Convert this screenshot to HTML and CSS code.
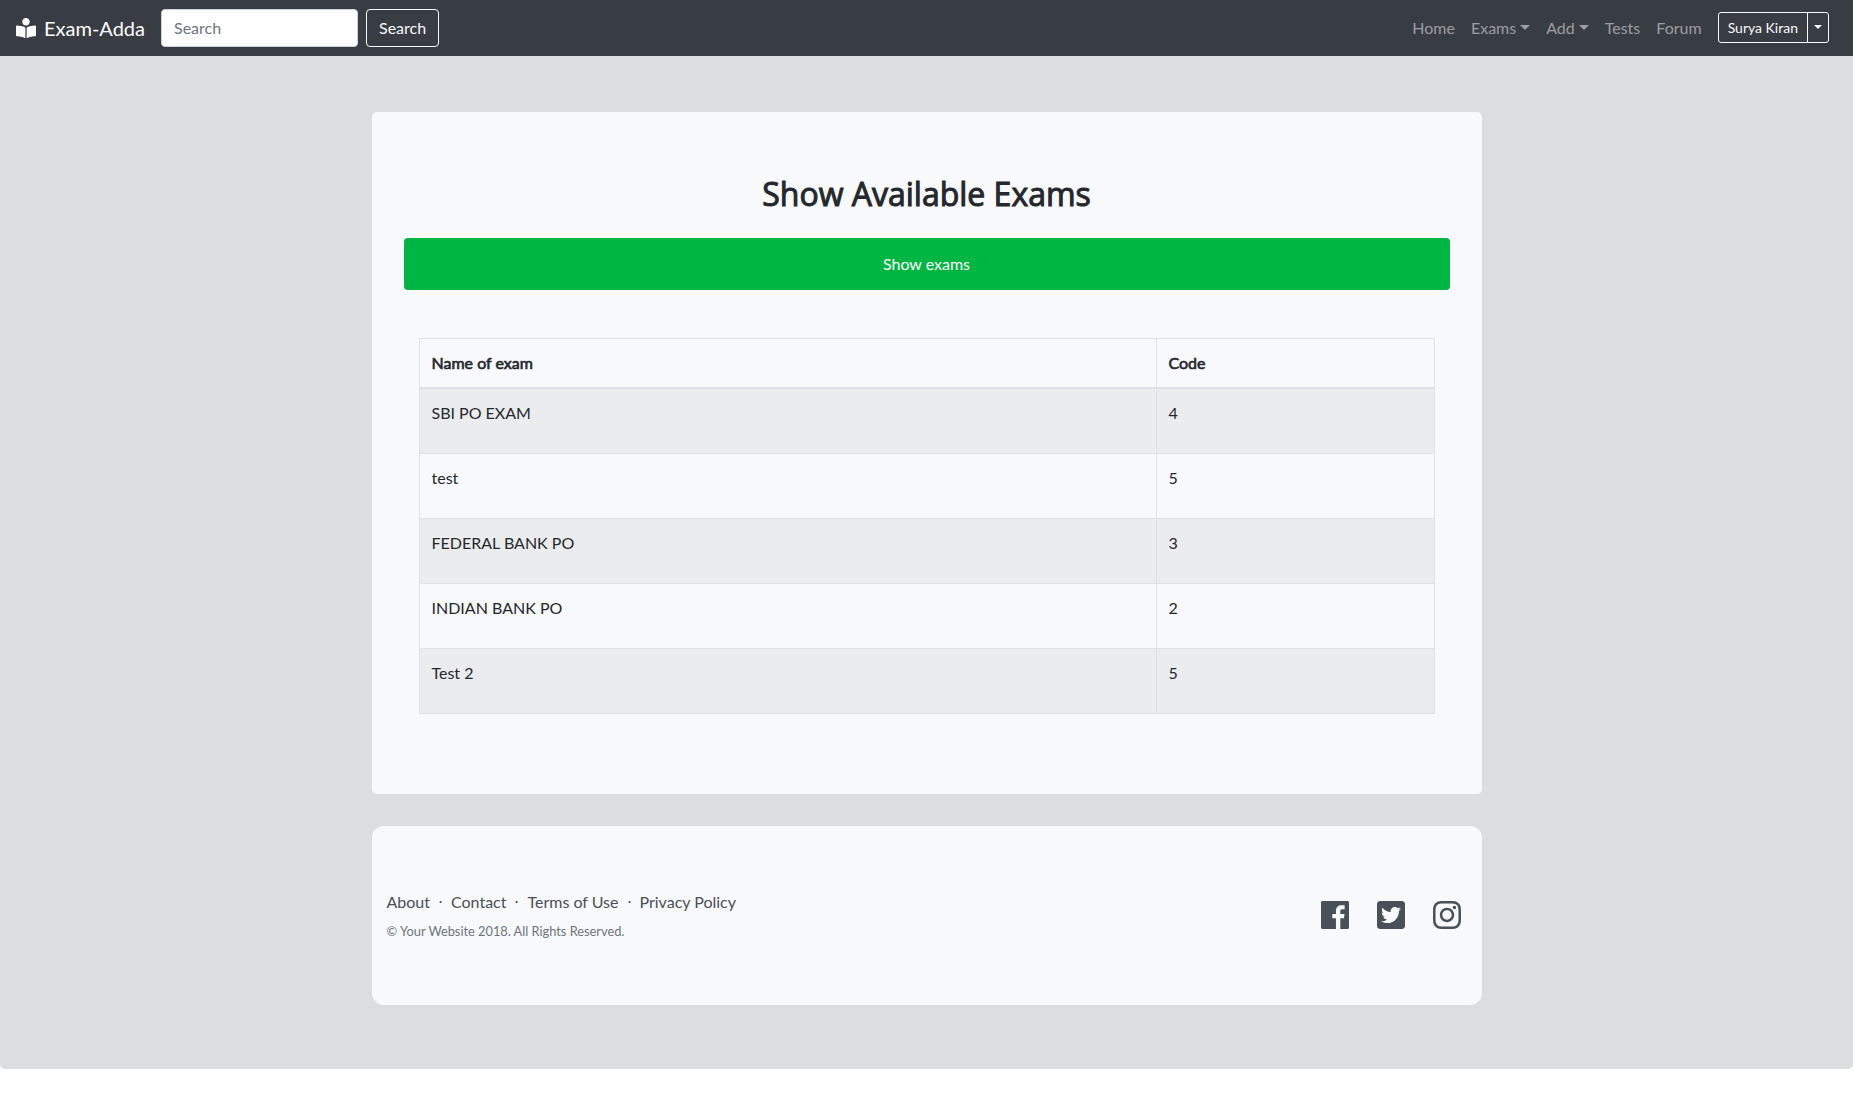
FILE: index.html
```html
<!DOCTYPE html>
<html lang="en">
<head>
  <meta charset="utf-8">
  <meta name="viewport" content="width=device-width, initial-scale=1">
  <title>Exam-Adda</title>
  <link rel="stylesheet" href="styles.css">
</head>
<body>
  <header class="navbar">
    <a class="brand" href="#">
      <svg class="brand-icon" viewBox="0 0 512 512" aria-hidden="true"><path d="M352 96c0-53.02-42.98-96-96-96s-96 42.98-96 96 42.98 96 96 96 96-42.98 96-96zM233.59 241.09c-59.33-36.32-155.43-46.3-203.79-49.05C13.55 191.13 0 203.51 0 219.14v222.8c0 14.33 11.59 26.28 26.49 27.05 43.66 2.29 131.99 10.68 193.04 41.43 9.37 4.72 20.48-1.71 20.48-11.87V252.56c-.01-4.67-2.32-8.95-6.42-11.47zm248.61-49.05c-48.35 2.74-144.46 12.73-203.78 49.05-4.1 2.51-6.41 6.96-6.41 11.63v245.79c0 10.19 11.14 16.63 20.54 11.9 61.04-30.72 149.32-39.11 192.97-41.4 14.9-.78 26.49-12.73 26.49-27.06V219.14c-.01-15.63-13.56-28.01-29.81-27.1z"/></svg>
      <span>Exam-Adda</span>
    </a>
    <form class="search">
      <input class="search-input" type="text" placeholder="Search" aria-label="Search">
      <button class="btn-outline" type="button">Search</button>
    </form>
    <nav class="nav">
      <a class="nav-link" href="#">Home</a>
      <a class="nav-link caret" href="#">Exams</a>
      <a class="nav-link caret" href="#">Add</a>
      <a class="nav-link" href="#">Tests</a>
      <a class="nav-link" href="#">Forum</a>
      <div class="btn-group">
        <button class="btn-outline btn-small" type="button">Surya Kiran</button>
        <button class="btn-outline btn-small caret" type="button" aria-label="Account menu"></button>
      </div>
    </nav>
  </header>

  <div class="page">
    <main class="panel">
      <h1 class="title">Show Available Exams</h1>
      <button class="btn-show" type="button">Show exams</button>
      <table class="exams">
        <thead>
          <tr><th scope="col">Name of exam</th><th class="col-code" scope="col">Code</th></tr>
        </thead>
        <tbody>
          <tr><td>SBI PO EXAM</td><td>4</td></tr>
          <tr><td>test</td><td>5</td></tr>
          <tr><td>FEDERAL BANK PO</td><td>3</td></tr>
          <tr><td>INDIAN BANK PO</td><td>2</td></tr>
          <tr><td>Test 2</td><td>5</td></tr>
        </tbody>
      </table>
    </main>

    <footer class="footer">
      <div>
        <ul class="links">
          <li><a href="#">About</a></li>
          <li>⋅</li>
          <li><a href="#">Contact</a></li>
          <li>⋅</li>
          <li><a href="#">Terms of Use</a></li>
          <li>⋅</li>
          <li><a href="#">Privacy Policy</a></li>
        </ul>
        <p class="copyright">© Your Website 2018. All Rights Reserved.</p>
      </div>
      <div class="social">
        <a href="#" aria-label="Facebook"><svg viewBox="0 32 448 448"><path d="M448 56.7v398.5c0 13.7-11.1 24.7-24.7 24.7H309.1V306.5h58.2l8.7-67.6h-67v-43.2c0-19.6 5.4-32.9 33.5-32.9h35.8v-60.5c-6.2-.8-27.4-2.7-52.2-2.7-51.6 0-87 31.5-87 89.4v49.9h-58.4v67.6h58.4V480H24.7C11.1 480 0 468.9 0 455.3V56.7C0 43.1 11.1 32 24.7 32h398.5c13.7 0 24.8 11.1 24.8 24.7z"/></svg></a>
        <a href="#" aria-label="Twitter"><svg viewBox="0 32 448 448"><path d="M400 32H48C21.5 32 0 53.5 0 80v352c0 26.5 21.5 48 48 48h352c26.5 0 48-21.5 48-48V80c0-26.5-21.5-48-48-48zm-48.9 158.8c.2 2.8.2 5.7.2 8.5 0 86.7-66 186.6-186.6 186.6-37.2 0-71.7-10.8-100.7-29.4 5.3.6 10.4.8 15.8.8 30.7 0 58.9-10.4 81.4-28-28.8-.6-53-19.5-61.3-45.5 10.1 1.5 19.2 1.5 29.6-1.2-30-6.1-52.5-32.5-52.5-64.4v-.8c8.7 4.9 18.9 7.9 29.6 8.3a65.447 65.447 0 0 1-29.2-54.6c0-12.2 3.2-23.4 8.9-33.1 32.3 39.8 80.8 65.8 135.2 68.6-9.3-44.5 24-80.6 64-80.6 18.9 0 35.9 7.9 47.9 20.7 14.8-2.8 29-8.3 41.6-15.8-4.9 15.2-15.2 28-28.8 36.1 13.2-1.4 26-5.1 37.8-10.2-8.9 13.1-20.1 24.7-32.9 34z"/></svg></a>
        <a href="#" aria-label="Instagram"><svg viewBox="0 32 448 448"><path d="M224.1 141c-63.6 0-114.9 51.3-114.9 114.9s51.3 114.9 114.9 114.9S339 319.5 339 255.9 287.7 141 224.1 141zm0 189.6c-41.1 0-74.7-33.5-74.7-74.7s33.5-74.7 74.7-74.7 74.7 33.5 74.7 74.7-33.6 74.7-74.7 74.7zm146.4-194.3c0 14.9-12 26.8-26.8 26.8-14.9 0-26.8-12-26.8-26.8s12-26.8 26.8-26.8 26.8 12 26.8 26.8zm76.1 27.2c-1.7-35.9-9.9-67.7-36.2-93.9-26.2-26.2-58-34.4-93.9-36.2-37-2.1-147.9-2.1-184.9 0-35.8 1.7-67.6 9.9-93.9 36.1s-34.4 58-36.2 93.9c-2.1 37-2.1 147.9 0 184.9 1.7 35.9 9.9 67.7 36.2 93.9s58 34.4 93.9 36.2c37 2.1 147.9 2.1 184.9 0 35.9-1.7 67.7-9.9 93.9-36.2 26.2-26.2 34.4-58 36.2-93.9 2.1-37 2.1-147.8 0-184.8zM398.8 388c-7.8 19.6-22.9 34.7-42.6 42.6-29.5 11.7-99.5 9-132.1 9s-102.7 2.6-132.1-9c-19.6-7.8-34.7-22.9-42.6-42.6-11.7-29.5-9-99.5-9-132.1s-2.6-102.7 9-132.1c7.8-19.6 22.9-34.7 42.6-42.6 29.5-11.7 99.5-9 132.1-9s102.7-2.6 132.1 9c19.6 7.8 34.7 22.9 42.6 42.6 11.7 29.5 9 99.5 9 132.1s2.7 102.7-9 132.1z"/></svg></a>
      </div>
    </footer>
  </div>
</body>
</html>
```
FILE: styles.css
```css
*, *::before, *::after { box-sizing: border-box; }

body {
  margin: 0;
  font: 400 16px/24px Lato, "Liberation Sans", sans-serif;
  color: #24282d;
  background: #fff;
}

a { color: inherit; text-decoration: none; }
button, input { font: inherit; margin: 0; }
button { cursor: pointer; }

.navbar {
  display: flex;
  align-items: center;
  padding: 8px 16px;
  min-height: 56px;
  background: #383c43;
}

.brand {
  display: flex;
  align-items: center;
  gap: 8px;
  margin-right: 16px;
  font-size: 20px;
  line-height: 30px;
  color: #fff;
}
.brand-icon { width: 20px; height: 20px; fill: currentColor; }

.search { display: flex; gap: 8px; }
.search-input {
  width: 197px;
  height: 38px;
  padding: 5px 12px 7px;
  border: 1px solid #ced4da;
  border-radius: 4px;
  background: #fff;
  color: #495057;
}
.search-input::placeholder { color: #6c757d; opacity: 1; }

.btn-outline {
  padding: 6px 12px;
  border: 1px solid #f8f9fa;
  border-radius: 4px;
  background: transparent;
  color: #f8f9fa;
}
.btn-small {
  padding: 4px 9px;
  border-radius: 3px;
  font-size: 14px;
  line-height: 21px;
}

.nav { display: flex; align-items: center; margin-left: auto; }
.nav-link { padding: 8px; color: rgba(255, 255, 255, .5); }

.caret::after {
  content: "";
  display: inline-block;
  margin-left: 4px;
  vertical-align: 4px;
  border-top: 5px solid;
  border-left: 5px solid transparent;
  border-right: 5px solid transparent;
}

.btn-group { display: flex; margin: 0 8px 2px; }
.btn-group .btn-small:first-child { border-radius: 3px 0 0 3px; }
.btn-group .caret { margin-left: -1px; padding: 4px 6px; border-radius: 0 3px 3px 0; }
.btn-group .caret::after { margin-left: 0; border-width: 4px 4px 0; }

.page {
  padding: 56px 16px 64px;
  border-radius: 0 0 5px 5px;
  background: #dcdddf;
}
.panel, .footer {
  max-width: 1110px;
  margin: 0 auto;
  background: #f8f9fb;
}
.panel { padding: 64px 32px 80px; border-radius: 5px; }

/* Stroked regular weight gives the headings their semi-bold look */
.title {
  margin: 0 0 26px;
  font: 400 32px/36px "Open Sans", "Noto Sans", sans-serif;
  text-align: center;
  -webkit-text-stroke: 1px currentColor;
}

.btn-show {
  display: block;
  width: 100%;
  padding: 14px;
  border: 0;
  border-radius: 4px;
  background: #00b642;
  color: #fff;
}

.exams {
  width: calc(100% - 30px);
  margin: 48px 15px 0;
  border-collapse: collapse;
  border: 1px solid #dee2e6;
}
.exams th, .exams td {
  padding: 12px;
  border: 1px solid #dee2e6;
  text-align: left;
  vertical-align: top;
}
.exams th { border-bottom-width: 2px; font-weight: 400; -webkit-text-stroke: .04em currentColor; }
.exams td { padding-bottom: 28px; }
.exams tbody tr:nth-child(odd) { background: #ebeced; }
.exams .col-code { width: 278px; }

.footer {
  display: flex;
  align-items: center;
  justify-content: space-between;
  margin-top: 32px;
  padding: 64px 21px 64px 15px;
  border-radius: 12px;
  color: #495057;
}
.links {
  display: flex;
  gap: 8px;
  margin: 0 0 8px;
  padding: 0;
  list-style: none;
}
.copyright { margin: 0; font-size: 80%; line-height: 19px; color: #6c757d; }
.social { display: flex; gap: 28px; margin-bottom: 2px; }
.social svg { display: block; width: 28px; height: 28px; fill: currentColor; }
```
